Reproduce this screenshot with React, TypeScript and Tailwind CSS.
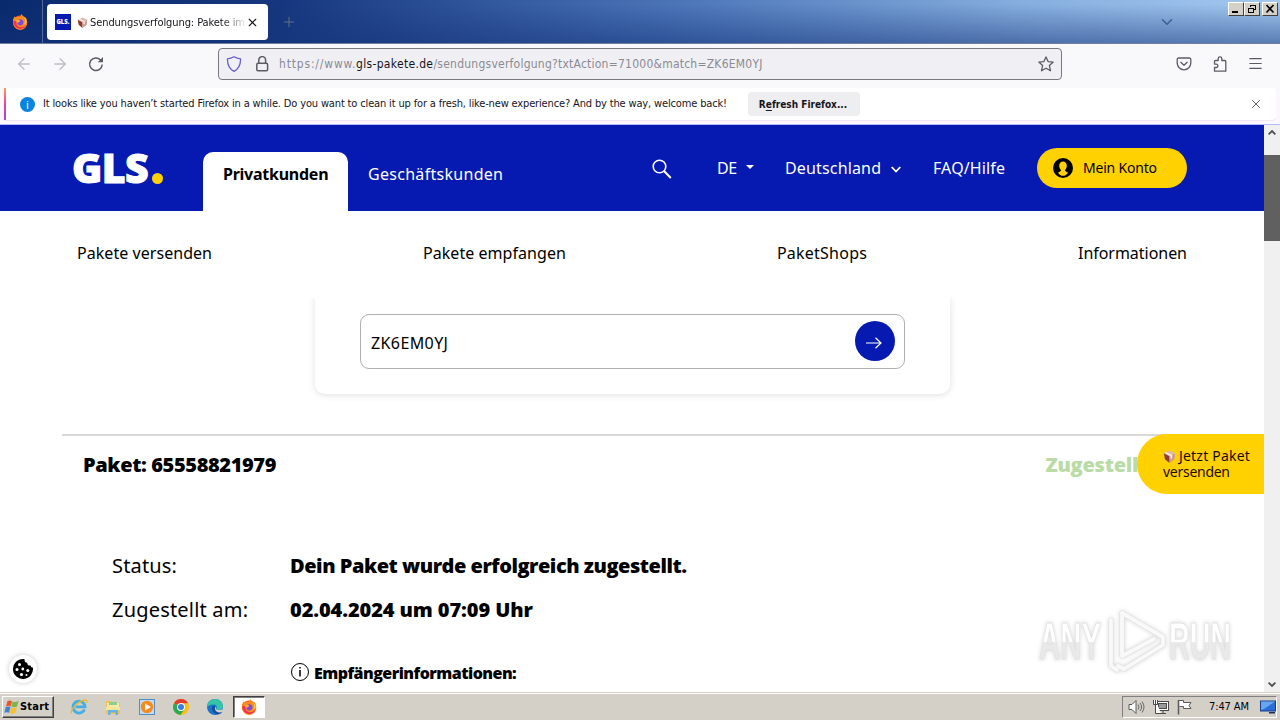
import type { ReactNode } from "react";
import { ArrowLeft, ArrowRight, ChevronDown, Menu, Plus, X } from "lucide-react";

const T = ({ className = "", children }: { className?: string; children: ReactNode }) => (
  <span className={`block shrink-0 whitespace-nowrap ${className}`}>{children}</span>
);

const Firefox = ({ className = "" }: { className?: string }) => (
  <svg viewBox="0 0 16 16" className={className}>
    <circle cx="8" cy="8.6" r="7.1" fill="#ff5a2a" />
    <path d="M1 7.5C1 4 2.5 3 3 2.2c.2 1 .6 1.3 1.2 1.6C5 2.4 7 2.500 8 3L9.600 0C10 2 12 2.200 12.500 4c.2-.5.3-1 .2-1.500C15 4.500 15.800 8 14.800 11c-1.200 3.500-4 4.800-6.800 4.800C4 15.800 1 12 1 7.500z" fill="#ff8a1e" />
    <path d="M9.600 0c.4 2 2.600 2.400 3.100 4.800.8 2 .6 4-.6 5.500 1.600-.5 2.400-2 2.300-3.300C14.200 4 11 3 9.600 0z" fill="#ffd83a" />
    <path d="M1.200 8c.8 5 5 7.800 9 6.600 2.200-.6 4-2.600 4.200-4.200-2 3-5.400 3.400-8 2C4.500 11.400 4 9 5 7.500 3 7 2 6 1.200 8z" fill="#f5314f" />
    <circle cx="8.300" cy="8.300" r="3.100" fill="#7a4be0" />
    <path d="M4.200 6.200c1.500-.8 2.500-.3 3.800.3.600.5-.2 1.200-1.300 1.400-.4 1.400-1.500 1-2.400.2z" fill="#ffb02e" />
  </svg>
);

const Parcel = ({ className = "" }: { className?: string }) => (
  <svg viewBox="0 0 12 12" className={className}>
    <path d="M.8 3 6 5.500V12L1.800 8.500z" fill="#8c3a32" />
    <path d="M11.200 3 6 5.500V12l4.600-3.500z" fill="#d09a8a" />
    <path d="M.8 3 6 .5 11.200 3 6 5.700z" fill="#dcb9ac" />
    <path d="m3 2 5.400 2.600v3L7 8V5.200L1.800 2.700z" fill="#fff3ee" />
  </svg>
);

const TitleBar = () => (
  <div className="flex h-[43px] shrink-0 bg-[linear-gradient(to_bottom,rgba(20,50,120,0)_10%,rgba(20,50,120,0.5)_100%),linear-gradient(to_right,#0a2a6e_0%,#16377f_22%,#4f79bb_55%,#86aede_80%,#a2c8f0_100%)]">
    <div className="flex w-[43px] items-center border-r border-[#53689c] pl-3">
      <Firefox className="size-4" />
    </div>
    <div className="ml-1 mt-1 flex h-9 w-[221px] items-center rounded bg-white pl-2">
      <div className="flex size-4 shrink-0 items-center justify-center bg-[#061ab1] font-['Open_Sans',sans-serif] text-[6px] font-extrabold text-white">GLS.</div>
      <Parcel className="ml-1.5 mr-[2px] size-[11px] shrink-0" />
      <div className="w-[154px] overflow-hidden [mask-image:linear-gradient(to_right,#000_86%,transparent_102%)]">
        <T className="pt-[1px] text-[11px] leading-[16px] tracking-[-0.081px] text-[#15141a]">Sendungsverfolgung: Pakete im</T>
      </div>
      <X className="ml-[2px] size-[13px] shrink-0 text-[#15141a]" strokeWidth={2.1} />
    </div>
    <div className="flex items-center pl-[13px]">
      <Plus className="size-4 text-[#5f7088]" strokeWidth={1.5} />
    </div>
    <div className="ml-auto flex items-center pr-[52px]">
      <ChevronDown className="size-[18px] text-[#3f5f94]" strokeWidth={2} />
    </div>
    <div className="flex pr-[2px] pt-[2px]">
      {["min", "restore", "close"].map((k) => (
        <div
          key={k}
          className={`flex h-[14px] w-4 items-center justify-center border border-b-[#404040] border-l-white border-r-[#404040] border-t-white bg-[#d4d0c8] ${k === "close" ? "ml-[2px]" : ""}`}
        >
          <svg viewBox="0 0 12 10" className="h-[10px] w-3" shapeRendering="crispEdges" fill="none" stroke="#000">
            {k === "min" && <path d="M2 8h6" strokeWidth="2" />}
            {k === "restore" && <path d="M4.500 3V1.500h5v4H8M4 1.500h6M2.500 4.500h5v4h-5zM2 4.500h6" />}
            {k === "close" && <path d="m2.500 1 7 7.500M9.500 1l-7 7.500" strokeWidth="1.700" shapeRendering="auto" />}
          </svg>
        </div>
      ))}
    </div>
  </div>
);

const Toolbar = () => (
  <div className="flex h-[45px] shrink-0 items-center border-t border-[#6f7f9f] bg-[#f9f9fb] pb-[5px] text-[#5b5b66]">
    <ArrowLeft className="ml-[15px] size-[18px] text-[#bdbdc4]" strokeWidth={1.7} />
    <ArrowRight className="ml-[18px] size-[18px] text-[#bdbdc4]" strokeWidth={1.7} />
    <svg viewBox="0 0 16 16" className="ml-[19px] size-4" fill="none" stroke="currentColor" strokeWidth="1.500">
      <path d="M14.200 8.500A6.300 6.300 0 1 1 12.600 4" />
      <path d="M15 1v5.200H9.800z" fill="currentColor" stroke="none" />
    </svg>
    <div className="ml-[114px] flex h-8 w-[844px] items-center rounded border border-[#77777f] bg-[#f0f0f4] pl-[7px] pr-[7px]">
      <svg viewBox="0 0 16 16" className="size-4" fill="none" stroke="#6a5fd0" strokeWidth="1.300">
        <path d="M8 .8c2 1.200 4 1.900 6.500 2.100.2 5.500-1.500 9.800-6.500 12.400C3 12.700 1.300 8.400 1.500 2.900 4 2.700 6 2 8 .8z" />
      </svg>
      <svg viewBox="0 0 16 16" className="ml-3 size-4" fill="none" stroke="currentColor" strokeWidth="1.500">
        <rect x="2.800" y="7.200" width="10.800" height="7.600" rx="1.200" />
        <path d="M4.800 7V4a3.400 3.400 0 0 1 6.800 0v3" />
      </svg>
      <div className="ml-[9px] flex pt-[1px] text-[12px] leading-4 text-[#8a8a92]">
        <T className="w-[77px] tracking-[0.82px]">https://www.</T>
        <T className="w-[77.500px] tracking-[0.323px] text-[#15141a]">gls-pakete.de</T>
        <T className="tracking-[0.234px]">/sendungsverfolgung?txtAction=71000&amp;match=ZK6EM0YJ</T>
      </div>
      <svg viewBox="0 0 16 16" className="ml-auto size-4" fill="none" stroke="currentColor" strokeWidth="1.300" strokeLinejoin="round">
        <path d="m8 .9 2.100 4.700 5.100.5-3.800 3.500 1.100 5.200L8 12.200l-4.500 2.600 1.100-5.200L.8 6.100l5.100-.5z" />
      </svg>
    </div>
    <svg viewBox="0 0 16 16" className="ml-[114px] size-4" fill="none" stroke="currentColor" strokeWidth="1.300" strokeLinecap="round" strokeLinejoin="round">
      <path d="M2.500 2h11A1.300 1.300 0 0 1 14.800 3.300V7A6.800 6.800 0 0 1 1.200 7V3.300A1.300 1.300 0 0 1 2.500 2z" />
      <path d="M4.800 6.200 8 9.200l3.200-3" />
    </svg>
    <svg viewBox="0 0 16 16" className="ml-5 size-4" fill="none" stroke="currentColor" strokeWidth="1.300" strokeLinejoin="round">
      <path d="M2.500 15.200V11.500h1.700a1.700 1.700 0 0 0 0-3.400H2.500V5.500a1 1 0 0 1 1-1h2.700V2.600a1.800 1.800 0 0 1 3.600 0v1.900h3a1 1 0 0 1 1 1v9.700z" />
    </svg>
    <Menu className="ml-[19px] size-[17px]" strokeWidth={1.700} />
  </div>
);

const Notice = () => (
  <div className="flex h-[37px] shrink-0 flex-col border-b border-[#b3bbfa] bg-[#fbf8fd] pl-1 pr-[4px]">
    <div className="flex h-8 items-center rounded-r bg-white shadow-[0_1px_1px_#efe4f2]">
      <div className="h-8 w-[2px] bg-[linear-gradient(#ff9a5a,#f0409a_50%,#a04be0)]" />
      <div className="ml-[14px] flex size-[15px] items-center justify-center rounded-full bg-[#0a84e0] font-['Noto_Sans',sans-serif] text-[11px] leading-none text-white">i</div>
      <T className="ml-2 w-[686px] text-[11px] leading-4 tracking-[-0.149px] text-[#15141a]">
        It looks like you haven’t started Firefox in a while. Do you want to clean it up for a fresh, like-new experience? And by the way, welcome back!
      </T>
      <div className="ml-[19px] flex h-6 w-28 items-center justify-center rounded bg-[#eeeef0] pr-[2px] text-[10px] font-bold text-[#15141a]">
        <T>R<span className="underline underline-offset-2">e</span>fresh Firefox...</T>
      </div>
      <X className="ml-auto mr-[13px] size-[14px] text-[#5b5b66]" strokeWidth={1.700} />
    </div>
  </div>
);

const SiteHeader = () => (
  <header className="flex h-[86px] shrink-0 bg-[#061ab1] font-['Noto_Sans',sans-serif] text-white">
    <div className="flex h-[86px] w-[203px] items-center pl-[72px]">
      <T className="mb-[3px] w-[80px] font-['Open_Sans',sans-serif] text-[41px] font-extrabold leading-[86px] tracking-[-0.6px] [-webkit-text-stroke:1px_white]">GLS</T>
      <span className="mt-[20px] size-[11px] rounded-full bg-[#ffd100]" />
    </div>
    <div className="mt-[27px] h-[59px] w-[145px] rounded-t-[10px] bg-white pl-5 pt-[10px]">
      <T className="text-[16px] font-bold leading-6 tracking-[-0.25px] text-black">Privatkunden</T>
    </div>
    <div className="w-[304px] pl-5 pt-[37px]">
      <T className="text-[16px] leading-6 tracking-[0.292px]">Geschäftskunden</T>
    </div>
    <div className="flex h-[86px] items-center">
      <svg viewBox="0 0 20 20" className="mt-[2px] size-5" fill="none" stroke="#fff" strokeWidth="1.600">
        <circle cx="7.500" cy="7.500" r="6.300" />
        <path d="m12 12 6.800 7" strokeWidth="2" />
      </svg>
      <T className="ml-[45px] w-[29px] text-[16px] leading-6 tracking-[-0.5px]">DE</T>
      <svg viewBox="0 0 8 4" className="mt-[-2px] h-1 w-2"><path d="M0 0h8L4 4z" fill="#fff" /></svg>
      <T className="ml-[31px] w-[106px] text-[16px] leading-6 tracking-[0.156px]">Deutschland</T>
      <svg viewBox="0 0 10 7" className="mt-[2px] h-[7px] w-[10px]" fill="none" stroke="#fff" strokeWidth="1.800"><path d="m.7 1 4.300 4.500L9.300 1" /></svg>
      <T className="ml-[32px] w-[104px] text-[16px] leading-6 tracking-[0.127px]">FAQ/Hilfe</T>
      <div className="flex h-10 w-[150px] items-center rounded-full bg-[#ffd100] pl-4 text-black">
        <svg viewBox="0 0 20 20" className="size-5">
          <circle cx="10" cy="10" r="10" />
          <path d="M10 3.500c2.300 0 3.800 1.700 3.800 4 0 2-.8 3.700-1.800 4.600 0 1.300 1.300 1.800 3 2.600C13.800 16.700 12 17.800 10 17.800S6.200 16.700 5 14.700c1.700-.8 3-1.300 3-2.600-1-.9-1.800-2.600-1.800-4.600 0-2.300 1.500-4 3.800-4z" fill="#ffd100" />
        </svg>
        <T className="ml-[10px] text-[14px] leading-5 tracking-[-0.201px]">Mein Konto</T>
      </div>
    </div>
  </header>
);

const Cookie = () => (
  <div className="absolute left-[9px] top-[530px] flex size-7 items-center justify-center rounded-full bg-white shadow-[0_0_5px_rgba(0,0,0,0.22)]">
    <svg viewBox="0 0 20 20" className="size-5">
      <path d="M10 0c.8 0 1.300.1 1.600.2-.3 2 .7 3.300 2.600 3.500 0 2 1.500 3.300 3.300 2.700.3 1.300 1 2 2.400 2.200A10 10 0 1 1 10 0z" />
      <g fill="#fff">
        <circle cx="6.500" cy="5.500" r="1.500" />
        <circle cx="4" cy="10.500" r="1.500" />
        <circle cx="9.800" cy="10" r="1.400" />
        <circle cx="14.800" cy="11.500" r="1.500" />
        <circle cx="8.500" cy="15.500" r="1.600" />
        <circle cx="13.500" cy="16" r="1" />
      </g>
    </svg>
  </div>
);

const Watermark = () => (
  <svg viewBox="0 0 210 80" className="absolute left-[1031px] top-[476px] h-20 w-[210px] [filter:drop-shadow(0_0_2px_rgba(0,0,0,0.16))]">
    <defs>
      <linearGradient id="fade" x1="0" y1="0" x2="0" y2="1">
        <stop offset="0.5" stopColor="#fff" />
        <stop offset="0.52" stopColor="#e9e9e9" />
      </linearGradient>
    </defs>
    <g fill="url(#fade)" stroke="#e2e2e2" strokeWidth="0.800" fontFamily="'Liberation Sans', sans-serif" fontSize="51" fontWeight="700">
      <text x="8" y="58" textLength="62" lengthAdjust="spacingAndGlyphs">ANY</text>
      <text x="138" y="58" textLength="62" lengthAdjust="spacingAndGlyphs">RUN</text>
    </g>
    <g fill="none" strokeLinejoin="round" strokeLinecap="round">
      <g stroke="#e2e2e2" strokeWidth="5">
        <path d="M80 19v46l6 4M91 12v43l32-17" />
        <path d="m91 12 41 24v8L93 68l-6-3" />
      </g>
      <g stroke="#f9f9f9" strokeWidth="3.800">
        <path d="M80 19v46l6 4M91 12v43l32-17" />
        <path d="m91 12 41 24v8L93 68l-6-3" />
      </g>
    </g>
  </svg>
);

const Site = () => (
  <main className="relative flex h-[567px] w-[1264px] shrink-0 flex-col overflow-hidden bg-white font-['Noto_Sans',sans-serif] text-black">
    <SiteHeader />
    <nav className="flex h-[86px] shrink-0 items-center justify-between pb-[2px] pl-[77px] pr-[77px] text-[16px] leading-6">
      <T className="tracking-[0.048px]">Pakete versenden</T>
      <T className="tracking-[0.057px]">Pakete empfangen</T>
      <T className="tracking-[0.238px]">PaketShops</T>
      <T className="tracking-[-0.036px]">Informationen</T>
    </nav>
    <div className="flex h-[113px] shrink-0 items-start overflow-hidden pl-[315px]">
      <div className="h-[97px] w-[635px] rounded-b-[10px] bg-white px-[45px] pt-[17px] shadow-[0_1px_7px_rgba(0,0,0,0.13)]">
        <div className="flex h-[55px] items-center rounded-[9px] border border-[#b0b0b0] pl-[10px] pr-[9px]">
          <T className="mt-[2px] text-[16px] leading-6 tracking-[0.4px]">ZK6EM0YJ</T>
          <div className="mb-[1px] ml-auto flex size-10 items-center justify-center rounded-full bg-[#061ab1]">
            <svg viewBox="0 0 16 12" className="mr-[3px] mt-[3px] h-3 w-4" fill="none" stroke="#fff" strokeWidth="1.200">
              <path d="M0 6h15M9.500.8 15 6l-5.500 5.200" />
            </svg>
          </div>
        </div>
      </div>
    </div>
    <section className="ml-[62px] mt-[24px] flex flex-col border-t-2 border-[#d9d9d9] font-['Open_Sans',sans-serif] text-[20px] font-extrabold leading-7">
      <div className="flex h-[58px] items-center pb-[1px] pl-[21px]">
        <T className="w-[962.5px] tracking-[-0.37px]">Paket: 65558821979</T>
        <T className="tracking-[-0.25px] text-[#b9dba6]">Zugestellt</T>
      </div>
      <dl className="mt-[58px] grid grid-cols-[178px_1fr] gap-y-4 pl-[50px]">
        <dt className="font-['Noto_Sans',sans-serif] font-normal"><T className="tracking-[0.174px]">Status:</T></dt>
        <dd><T className="tracking-[-0.472px]">Dein Paket wurde erfolgreich zugestellt.</T></dd>
        <dt className="font-['Noto_Sans',sans-serif] font-normal"><T className="tracking-[0.194px]">Zugestellt am:</T></dt>
        <dd><T className="tracking-[-0.09px]">02.04.2024 um 07:09 Uhr</T></dd>
      </dl>
      <div className="ml-[229px] mt-[36px] flex h-6 items-center">
        <svg viewBox="0 0 18 18" className="size-[18px]" fill="none" stroke="#000">
          <circle cx="9" cy="9" r="8.500" />
          <path d="M9 7v6.500M9 4v1.500" strokeWidth="1.500" />
        </svg>
        <T className="ml-[5px] mt-[2px] text-[16px] tracking-[-0.53px]">Empfängerinformationen:</T>
      </div>
    </section>
    <div className="absolute right-0 top-[309px] h-[60px] w-[127px] rounded-l-full bg-[#ffd100] pl-[26px] pt-[14px] text-[14px] leading-4 text-[#1c0a00]">
      <div className="flex items-center">
        <Parcel className="mr-[3px] size-[13px]" />
        <T className="tracking-[0.2px]">Jetzt Paket</T>
      </div>
      <T className="tracking-[-0.275px]">versenden</T>
    </div>
    <Cookie />
    <Watermark />
  </main>
);

const Scrollbar = () => (
  <div className="flex h-[567px] w-4 shrink-0 flex-col items-center bg-[#f0f0f0]">
    <svg viewBox="0 0 8 5" className="mt-[5px] h-[5px] w-2" fill="none" stroke="#505050" strokeWidth="1.800"><path d="M.6 4.400 4 1l3.400 3.400" /></svg>
    <div className="mt-5 h-[86px] w-4 bg-[#606060]" />
    <svg viewBox="0 0 8 5" className="mb-[5px] mt-auto h-[5px] w-2" fill="none" stroke="#505050" strokeWidth="1.800"><path d="M.6.6 4 4 7.400.6" /></svg>
  </div>
);

const Taskbar = () => (
  <footer className="flex h-7 shrink-0 items-center border-t border-[#d4d0c8] bg-[#d4d0c8] pl-[2px] pr-[3px] text-[11px] text-black shadow-[inset_0_1px_0_#fff]">
    <div className="mt-[1px] flex h-[22px] w-[52px] items-center border border-b-[#404040] border-l-white border-r-[#404040] border-t-white pl-[1px] shadow-[inset_-1px_-1px_0_#808080]">
      <svg viewBox="0 0 16 16" className="size-4">
        <path d="M3.500 2C5.500 1 6.500 1.300 8 2.200L6.600 7.500C5 6.600 4 6.700 2 7.500z" fill="#e8552c" />
        <path d="M8.600 2.400c1.500.9 3 .9 6-.5L13 7.600c-2 1-3.800.9-5.700-.1z" fill="#7ab648" />
        <path d="M1.800 8.100c1.700-.8 3-.8 4.700 0L5 13.800c-1.500-.9-3-.8-4.700-.1z" fill="#3f83d8" />
        <path d="M7 8.300c1.600.8 3.600 1 5.900-.1l-1.600 5.900c-2 1-3.900.9-5.700 0z" fill="#f7c030" />
      </svg>
      <T className="font-bold leading-4 tracking-[0.2px]">Start</T>
    </div>
    <svg viewBox="0 0 18 18" className="ml-[16px] mt-[1px] size-[18px]" fill="none">
      <path d="M14.500 11.500A6 6 0 1 1 15 8.800H5.500" stroke="#45aee6" strokeWidth="2.800" />
      <path d="M1.500 15.500C-.5 12 10 1.500 16 2c1.500.5 1 2 .5 3" stroke="#e9b92c" strokeWidth="1.300" />
    </svg>
    <svg viewBox="0 0 18 18" className="ml-4 mt-[1px] size-[18px]">
      <path d="M2 3h6l1 2h7v11H2z" fill="#e9c55c" />
      <path d="M3 5h12v6H3z" fill="#f8e9a8" />
      <path d="M5 4h8v3H5z" fill="#8ccf8a" />
      <path d="M2 9h14v3H2z" fill="#fbe79a" />
      <path d="M4 17v-5h10v5h-2.500v-2.500h-5V17z" fill="#62b4e6" />
    </svg>
    <svg viewBox="0 0 18 18" className="ml-4 mt-[1px] size-[18px]">
      <rect x="1.500" y="1.500" width="15" height="15" fill="#bfdcf2" stroke="#4f8fc6" />
      <circle cx="9" cy="9" r="6.200" fill="#f58a1f" />
      <path d="M7 5.500v7L13 9z" fill="#fff" />
    </svg>
    <svg viewBox="0 0 18 18" className="ml-[16px] mt-[1px] size-[18px]">
      <circle cx="9" cy="9" r="8" fill="#fbc116" />
      <path d="M9 9 2 5.200A8 8 0 0 1 16 5.200H9z" fill="#e33b2e" />
      <path d="M9 9 2 5.200A8 8 0 0 0 8.500 17L12.500 11z" fill="#2da94f" />
      <circle cx="9" cy="9" r="4" fill="#fff" />
      <circle cx="9" cy="9" r="3" fill="#3c7de6" />
    </svg>
    <svg viewBox="0 0 18 18" className="ml-4 mt-[1px] size-[18px]">
      <circle cx="9" cy="9" r="8" fill="#1b74c9" />
      <path d="M1 9C1 4 5 1 9 1c5 0 8 3.400 8 7 0 2.600-2 4-4.500 4C11 12 10 11.500 10.500 10.500 11.500 8 10 6.500 7.500 6.500 4 6.500 1.500 8 1 9z" fill="#35c4a8" />
      <path d="M6 10c0 4 3 6.500 6.500 6.300 1.500-.3 3-1.300 3.800-2.600-3 1.300-6.800.6-7.300-3C9 9 9.500 8.500 9.500 8.500 8 7.500 6 8 6 10z" fill="#134f9e" />
      <path d="M9.500 8.500c1 1 .5 1.800.6 2.600 1 1.300 4 1.300 6 .1L17 12l-1 2c-3 1-6.500.2-7-3z" fill="#d4d0c8" />
    </svg>
    <div className="ml-[9px] mt-[1px] flex h-[22px] w-8 items-center justify-center border border-b-white border-l-[#404040] border-r-white border-t-[#404040] bg-white shadow-[inset_1px_1px_0_#808080]">
      <Firefox className="size-4" />
    </div>
    <div className="ml-auto mt-[1px] flex h-[22px] w-[155px] items-center border border-b-white border-l-[#808080] border-r-white border-t-[#808080] pl-[5px]">
      <svg viewBox="0 0 17 16" className="h-4 w-[17px]" fill="none" stroke="#5a5a5a">
        <path d="M1 5.500h3L8 1.500v13l-4-4H1z" fill="#fff" />
        <path d="M10 5.500q2 2.500 0 5M12 4q3.200 4 0 8M14 2.500q4 5.500 0 11" strokeWidth=".900" />
      </svg>
      <svg viewBox="0 0 17 16" className="ml-[7px] h-4 w-[17px]" stroke="#4a4a4a">
        <rect x="4.500" y="2.500" width="12" height="9" fill="#fff" />
        <rect x="6.500" y="4.500" width="8" height="5" fill="#9a9a9a" />
        <path d="M1.500 1v4.500h4V1M3.500 1v13.500H9M8 14.500h6M11 12v2" fill="#fff" />
      </svg>
      <svg viewBox="0 0 17 16" className="ml-[7px] h-4 w-[17px]" stroke="#5a5a5a">
        <path d="M2.500 1.500h5v2h7.500l-2 3 2 3H7.500v-2h-4" fill="#fff" />
        <path d="M2.500 1v14.500" strokeWidth="1.500" />
      </svg>
      <T className="ml-[16px] w-[44px] leading-4 tracking-[-0.112px]">7:47 AM</T>
      <svg viewBox="0 0 16 14" className="ml-[7px] h-[14px] w-4">
        <rect x=".5" y="1" width="15" height="10" fill="#2b6fd6" stroke="#173f8c" />
        <path d="M1 1.500h14L4 9 1 10z" fill="#69a6f0" />
        <path d="M9 12h6v1.500H9z" fill="#1d2f55" />
      </svg>
    </div>
  </footer>
);

export default function App() {
  return (
    <div className="flex h-[720px] w-[1280px] flex-col overflow-hidden bg-white font-['DejaVu_Sans_Condensed','DejaVu_Sans',sans-serif]">
      <TitleBar />
      <Toolbar />
      <Notice />
      <div className="flex h-[567px] shrink-0">
        <Site />
        <Scrollbar />
      </div>
      <Taskbar />
    </div>
  );
}
